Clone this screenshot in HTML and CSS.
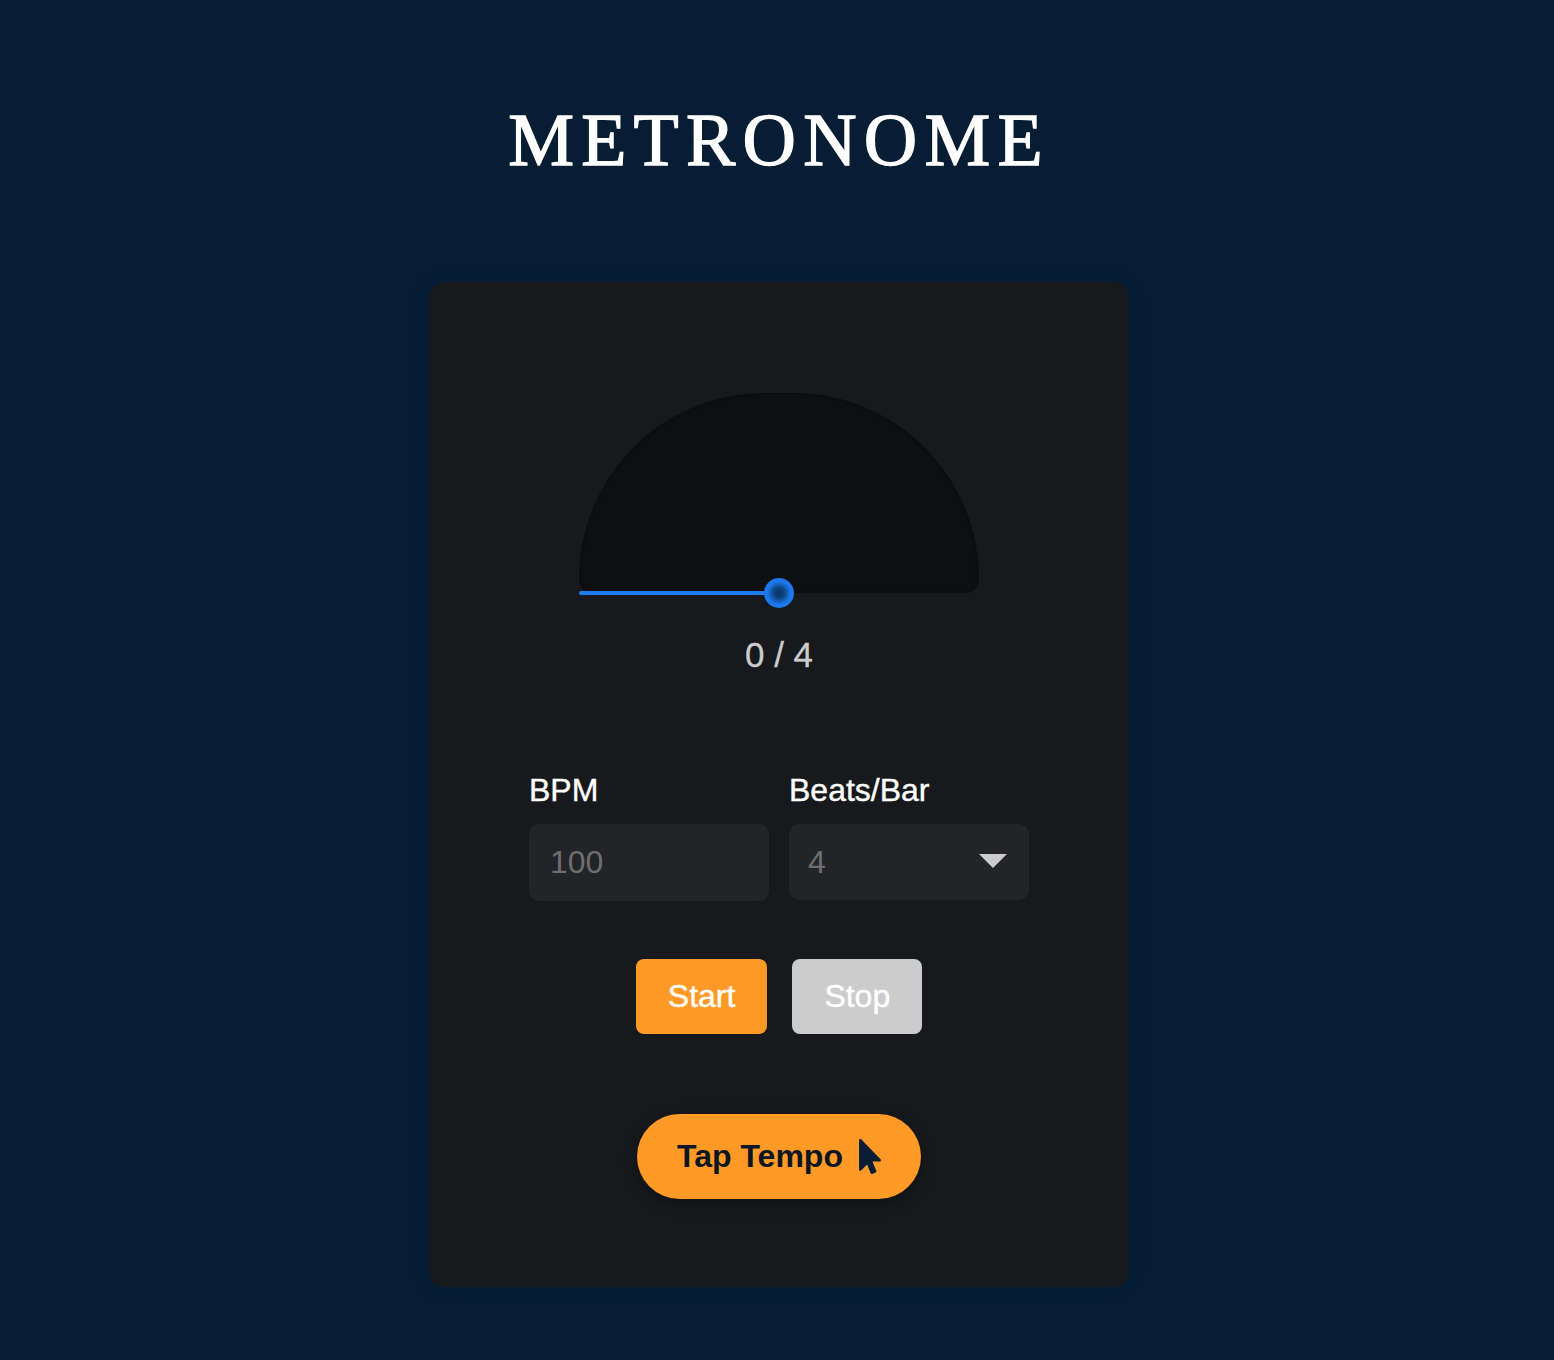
FILE: index.html
```html
<!DOCTYPE html>
<html lang="en">
  <head>
    <meta charset="UTF-8" />
    <meta name="viewport" content="width=device-width, initial-scale=1.0" />
    <title>Metronome</title>
    <link rel="stylesheet" href="styles.css">
  </head>
  <body>
    <h1 class="title">METRONOME</h1>

    <div class="metronome">
      <!-- Pendulum dial -->
      <div class="dial">
        <div class="pendulum"></div>
        <div class="pivot"></div>
      </div>
      <div class="beat-count">0 / 4</div>

      <!-- Settings -->
      <div class="settings">
        <div class="field">
          <label class="field-label" for="bpm">BPM</label>
          <input class="field-input" id="bpm" type="text" value="100" disabled />
        </div>
        <div class="field">
          <label class="field-label" for="beats">Beats/Bar</label>
          <div class="select-wrap">
            <select class="field-select" id="beats" disabled>
              <option>4</option>
            </select>
          </div>
        </div>
      </div>

      <!-- Controls -->
      <div class="controls">
        <button class="btn btn-start">Start</button>
        <button class="btn btn-stop">Stop</button>
      </div>

      <button class="tap-btn">
        Tap Tempo
        <svg class="tap-icon" viewBox="0 0 320 512" aria-hidden="true">
          <path d="M302.189 329.126H196.105l55.831 135.993c3.889 9.428-.555 19.999-9.444 23.999l-49.165 21.427c-9.165 4-19.443-.571-23.332-9.714l-53.053-129.136-86.664 89.138C18.729 472.71 0 463.554 0 447.977V18.299C0 1.899 19.921-6.096 30.277 5.443l284.412 292.542c11.472 11.179 3.007 31.141-12.5 31.141z" />
        </svg>
      </button>
    </div>
  </body>
</html>
```

FILE: styles.css
```css
* {
  box-sizing: border-box;
}

body {
  margin: 0;
  padding: 100px 0 0 4px;
  min-height: 1360px;
  display: flex;
  flex-direction: column;
  align-items: center;
  background-color: #061d33;
  font-family: "Liberation Sans", Arial, sans-serif;
  overflow: hidden;
}

.title {
  margin: 0 0 102px;
  font-family: "Liberation Serif", "Times New Roman", serif;
  font-size: 74px;
  font-weight: 400;
  line-height: 80px;
  letter-spacing: 7.2px;
  color: #fff;
  -webkit-text-stroke: 1.3px #fff;
}

.metronome {
  width: 700px;
  padding: 111px 100px 88px;
  display: flex;
  flex-direction: column;
  align-items: center;
  background-color: #17191c;
  border-radius: 15px;
  box-shadow: 0 0 20px rgba(10, 60, 110, 0.1);
}

/* Half circle dial */
.dial {
  position: relative;
  width: 400px;
  height: 200px;
  background-color: #0f1012;
  border-radius: 200px 200px 15px 15px;
  box-shadow: inset 0 0 8px rgba(0, 0, 0, 0.35);
}

.pendulum {
  position: absolute;
  left: 0;
  bottom: -2px;
  width: 200px;
  height: 4px;
  background-color: #1f7cf0;
  border-radius: 2px;
}

.pivot {
  position: absolute;
  left: 185px;
  bottom: -15px;
  width: 30px;
  height: 30px;
  border-radius: 50%;
  background: radial-gradient(circle closest-side, #0a3462 0%, #0e4480 35%, #1c78ec 78%);
}

.beat-count {
  margin-top: 42px;
  font-size: 35px;
  line-height: 40px;
  color: #ccc;
  -webkit-text-stroke: 0.3px #ccc;
}

.settings {
  margin-top: 97px;
  width: 100%;
  display: flex;
  align-items: flex-start;
  gap: 20px;
}

.field {
  width: 240px;
  display: flex;
  flex-direction: column;
  gap: 16px;
}

.field-label {
  font-size: 32px;
  line-height: 36px;
  color: #fff;
  -webkit-text-stroke: 0.4px #fff;
}

.field-input,
.field-select {
  width: 100%;
  border: none;
  border-radius: 10px;
  background-color: #222428;
  color: #6e6e6e;
  font-family: inherit;
  font-size: 32px;
  opacity: 1;
}

.field-input {
  height: 77px;
  padding: 0 21px;
}

.select-wrap {
  position: relative;
}

.field-select {
  display: block;
  height: 76px;
  padding: 0 19px;
  appearance: none;
}

/* Dropdown arrow */
.select-wrap::after {
  content: "";
  position: absolute;
  top: 30px;
  right: 22px;
  border-left: 14px solid transparent;
  border-right: 14px solid transparent;
  border-top: 14px solid #ccc;
}

.controls {
  margin-top: 58px;
  display: flex;
  gap: 25px;
}

.btn {
  height: 75px;
  padding: 0 32px;
  border: none;
  border-radius: 8px;
  color: #fff;
  font-family: inherit;
  font-size: 32px;
  -webkit-text-stroke: 0.4px #fff;
}

.btn-start {
  background-color: #ff9a26;
}

.btn-stop {
  background-color: #ccc;
}

.tap-btn {
  margin-top: 80px;
  height: 85px;
  padding: 0 40px;
  display: flex;
  align-items: center;
  gap: 16px;
  border: none;
  border-radius: 43px;
  background-color: #ff9a26;
  color: #0b1622;
  font-family: inherit;
  font-size: 32px;
  font-weight: 700;
  box-shadow: 0 4px 15px rgba(0, 0, 0, 0.3);
}

.tap-icon {
  width: 22px;
  height: 35px;
  fill: #061d33;
}
```
